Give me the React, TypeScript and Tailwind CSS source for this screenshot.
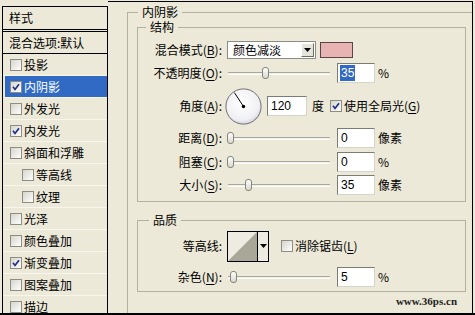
import React from 'react'

const cjk = "font-['Noto_Sans_CJK_SC','Noto_Sans',sans-serif]"

const styles = [
  { t: '投影' },
  { t: '内阴影', on: true, sel: true },
  { t: '外发光' },
  { t: '内发光', on: true },
  { t: '斜面和浮雕' },
  { t: '等高线', sub: true },
  { t: '纹理', sub: true },
  { t: '光泽' },
  { t: '颜色叠加' },
  { t: '渐变叠加', on: true },
  { t: '图案叠加' },
  { t: '描边' },
]

const Check = ({ on }: { on?: boolean }) => (
  <span className="flex h-[12px] w-[12px] shrink-0 items-center justify-center border border-[#8e8d84] bg-gradient-to-br from-[#d6d5cc] to-white">
    {on && (
      <svg width="8" height="8" viewBox="0 0 8 8">
        <path d="M1 3.8 L3 6.4 L7 1.2" stroke="#1f2f86" strokeWidth="1.7" fill="none" />
      </svg>
    )}
  </span>
)

// label with one underlined mnemonic letter, e.g. 混合模式(B):
const Label = ({ text, k }: { text: string; k?: string }) => (
  <span className="w-[84px] shrink-0 text-right">
    {text}
    {k && (
      <>
        (<span className="underline underline-offset-2">{k}</span>):
      </>
    )}
    {!k && ':'}
  </span>
)

const Slider = ({ at, left = 6 }: { at: number; left?: number }) => (
  <div className="relative flex h-[12px] w-[102px] shrink-0 items-center" style={{ marginLeft: left }}>
    <div className="h-[3px] w-full border-t border-b border-t-[#a9a79b] border-b-white bg-[#f3f2ea]" />
    <span
      className="absolute top-0 h-[12px] w-[7px] rounded-[3px] border border-[#85847a] bg-gradient-to-b from-white to-[#d9d8ce]"
      style={{ left: at }}
    />
  </div>
)

const Field = ({ value, sel, w = 38, ml = 7 }: { value: string; sel?: boolean; w?: number; ml?: number }) => (
  <div
    className="flex h-[20px] shrink-0 items-center border border-t-[#7c7b74] border-l-[#7c7b74] border-r-[#d6d4c8] border-b-[#d6d4c8] bg-white pl-[2px] font-['Liberation_Sans',sans-serif] text-[12px]"
    style={{ width: w, marginLeft: ml }}
  >
    <span className={sel ? 'bg-[#316ac5] px-px text-white' : 'px-px'}>{value}</span>
  </div>
)

const Arrow = () => (
  <svg width="7" height="4" viewBox="0 0 7 4">
    <polygon points="0,0 7,0 3.5,4" fill="#000" />
  </svg>
)

const Dial = () => (
  <svg width="37" height="37" viewBox="0 0 37 37" className="ml-[3px] shrink-0">
    <defs>
      <radialGradient id="dialFill" cx="45%" cy="40%" r="65%">
        <stop offset="0" stopColor="#ffffff" />
        <stop offset="0.75" stopColor="#f0f0f4" />
        <stop offset="1" stopColor="#c9cad6" />
      </radialGradient>
    </defs>
    <circle cx="18.5" cy="18.5" r="17.6" fill="url(#dialFill)" stroke="#6f6f78" strokeWidth="1" />
    <line x1="18.5" y1="18.5" x2="9.4" y2="4.6" stroke="#000" strokeWidth="1" />
    <circle cx="18.5" cy="18.5" r="1.7" fill="#000" />
  </svg>
)

export default function App() {
  return (
    <div className={`flex h-[315px] w-[475px] overflow-hidden border-b-2 border-black bg-[#ece9d8] text-[12px] leading-[16px] text-black ${cjk}`}>
      {/* Left: style list */}
      <div className="ml-[2px] mt-[6px] flex w-[106px] shrink-0 flex-col overflow-hidden border-x border-t border-black">
        <div className="flex h-[25px] shrink-0 items-center border-b-[3px] border-double border-black pl-[6px]">样式</div>
        <div className="flex h-[22px] shrink-0 items-center border-b border-black pl-[6px]">混合选项:默认</div>
        {styles.map((s) => (
          <div
            key={s.t}
            className={`flex h-[22px] shrink-0 items-center gap-[2px] border-b border-[#f6f5ee] ${
              s.sub ? 'pl-[19px]' : 'pl-[7px]'
            } ${s.sel ? 'ml-[2px] bg-[#316ac5] !pl-[5px] text-white' : ''}`}
          >
            <Check on={s.on} />
            <span>{s.t}</span>
          </div>
        ))}
      </div>

      {/* Right: inner shadow settings */}
      <div className="mr-[2px] mt-px flex min-w-0 flex-1 flex-col border-t border-r border-black pl-[19px] pt-[3px]">
        <fieldset className="flex min-w-0 flex-1 flex-col border-l border-t border-[#b3b09f] pl-[9px]">
          <legend className="ml-px px-1 leading-[14px]">内阴影</legend>

          <fieldset className="mr-[6px] mt-px border border-[#b3b09f] pb-[6px]">
            <legend className="ml-[8px] px-1 leading-[14px]">结构</legend>

            <div className="mt-[7px] flex h-[18px] items-center">
              <Label text="混合模式" k="B" />
              <div className="ml-[5px] flex h-[18px] w-[89px] shrink-0 items-center border border-[#8d8c84] bg-white pl-[5px]">
                <span className="flex-1">颜色减淡</span>
                <span className="mr-px flex h-[14px] w-[13px] items-center justify-center border border-t-white border-l-white border-r-[#6f6e66] border-b-[#6f6e66] bg-[#e6e4d8]">
                  <Arrow />
                </span>
              </div>
              <span className="ml-[4px] h-[16px] w-[33px] shrink-0 border border-[#5a4646] bg-[#e8b3b3]" />
            </div>

            <div className="mt-[4px] flex h-[20px] items-center">
              <Label text="不透明度" k="O" />
              <Slider at={34} />
              <Field value="35" sel />
              <span className="ml-[3px]">%</span>
            </div>

            <div className="mt-[5px] flex h-[36px] items-center">
              <Label text="角度" k="A" />
              <Dial />
              <Field value="120" w={40} ml={5} />
              <span className="ml-[5px]">度</span>
              <span className="ml-[6px]">
                <Check on />
              </span>
              <span className="ml-[2px]">
                使用全局光(<span className="underline underline-offset-2">G</span>)
              </span>
            </div>

            <div className="mt-[4px] flex h-[20px] items-center">
              <Label text="距离" k="D" />
              <Slider at={-1} />
              <Field value="0" />
              <span className="ml-[3px]">像素</span>
            </div>

            <div className="mt-[4px] flex h-[20px] items-center">
              <Label text="阻塞" k="C" />
              <Slider at={-1} />
              <Field value="0" />
              <span className="ml-[3px]">%</span>
            </div>

            <div className="mt-[3px] flex h-[20px] items-center">
              <Label text="大小" k="S" />
              <Slider at={17} />
              <Field value="35" />
              <span className="ml-[3px]">像素</span>
            </div>
          </fieldset>

          <fieldset className="mr-[6px] mt-[10px] border border-[#b3b09f] pb-[4px]">
            <legend className="ml-[11px] px-1 leading-[16px]">品质</legend>

            <div className="mt-[2px] flex h-[32px] items-center">
              <Label text="等高线" />
              <div className="ml-[5px] flex h-[31px] w-[42px] shrink-0 border border-black bg-[#eeece2]">
                <svg width="29" height="29" viewBox="0 0 29 29" className="block">
                  <polygon points="0,29 29,0 29,29" fill="#a9a797" />
                </svg>
                <span className="flex flex-1 items-center justify-center border-l border-black">
                  <Arrow />
                </span>
              </div>
              <span className="ml-[12px]">
                <Check />
              </span>
              <span className="ml-[2px]">
                消除锯齿(<span className="underline underline-offset-2">L</span>)
              </span>
            </div>

            <div className="mt-[5px] flex h-[20px] items-center">
              <Label text="杂色" k="N" />
              <Slider at={2} />
              <Field value="5" />
              <span className="ml-[3px]">%</span>
            </div>
          </fieldset>

          <div className="mr-[15px] mt-[2px] text-right font-['Liberation_Serif',serif] text-[11px] font-bold leading-[14px] text-[#222]">
            www.36ps.cn
          </div>
        </fieldset>
      </div>
    </div>
  )
}
